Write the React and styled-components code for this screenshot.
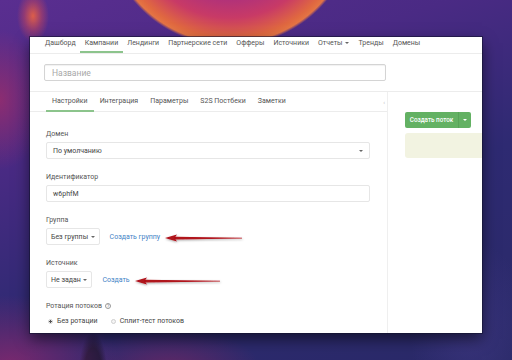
import React from "react";
import styled, { createGlobalStyle } from "styled-components";

const Global = createGlobalStyle`
  html, body { margin: 0; padding: 0; }
  body { font-family: Roboto, "Liberation Sans", sans-serif; }
  * { box-sizing: border-box; }
`;

const Desktop = styled.div`
  position: relative;
  width: 512px;
  height: 360px;
  overflow: hidden;
  padding: 37px 0 0 30px;
  background:
    radial-gradient(circle at 230px -80px, #7a2a92 0, #a02c88 65px, #c83a66 98px, #e06840 118px, #e47444 123px, rgba(90,40,130,0) 126px),
    radial-gradient(ellipse 16px 26px at 33px 16px, rgba(228,96,70,0.95) 0, rgba(200,70,90,0.5) 55%, rgba(200,70,90,0) 100%),
    radial-gradient(ellipse 45px 70px at 0px 100px, rgba(160,45,105,0.75) 0, rgba(160,45,105,0) 100%),
    radial-gradient(ellipse 110px 70px at 10px 365px, rgba(130,40,110,0.9) 0, rgba(130,40,110,0) 100%),
    radial-gradient(ellipse 14px 40px at 93px 372px, #191936 0, #191936 60%, rgba(25,25,54,0) 100%),
    radial-gradient(ellipse 90px 40px at 170px 368px, rgba(110,40,100,0.8) 0, rgba(110,40,100,0) 100%),
    radial-gradient(ellipse 60px 90px at 470px 330px, rgba(70,60,140,0.5) 0, rgba(70,60,140,0) 100%),
    linear-gradient(160deg, #5a2e90 0%, #4a2a84 30%, #2e2a72 60%, #2a2a68 100%);
`;

const Window = styled.div`
  width: 452px;
  height: 296px;
  background: #fff;
  overflow: hidden;
  display: flex;
  flex-direction: column;
  box-shadow: 0 0 0 1px rgba(20, 20, 50, 0.6), 0 6px 14px rgba(0, 0, 0, 0.55);
`;

const Nav = styled.nav`
  height: 17px;
  flex: none;
  display: flex;
  align-items: stretch;
  padding-left: 10.5px;
  border-bottom: 1px solid #ececec;
`;

const NavItem = styled.div`
  display: flex;
  align-items: center;
  padding: 0 4.5px 2px;
  font-size: 7px;
  color: #555;
  white-space: nowrap;
  border-bottom: 2px solid ${(p) => (p.$active ? "#8cc48c" : "transparent")};
`;

const Caret = styled.span`
  display: inline-block;
  width: 0;
  height: 0;
  margin-left: ${(p) => p.$gap ?? 3}px;
  border-left: 2px solid transparent;
  border-right: 2px solid transparent;
  border-top: 2px solid ${(p) => p.$color || "#666"};
  vertical-align: middle;
`;

const TitleBar = styled.div`
  height: 38px;
  flex: none;
  padding: 10px 0 0 14px;
  border-bottom: 1px solid #ececec;
`;

const TitleInput = styled.div`
  width: 342px;
  height: 17px;
  border: 1px solid #d4d4d4;
  border-radius: 2px;
  box-shadow: inset 0 1px 1px rgba(0, 0, 0, 0.06);
  display: flex;
  align-items: center;
  padding-left: 7px;
  font-size: 8.5px;
  color: #a8a8a8;
`;

const Body = styled.div`
  flex: 1;
  display: flex;
  min-height: 0;
`;

const Main = styled.div`
  width: 358px;
  flex: none;
  border-right: 1px solid #efefef;
  display: flex;
  flex-direction: column;
`;

const Tabs = styled.div`
  position: relative;
  height: 20px;
  flex: none;
  display: flex;
  padding-left: 16px;
  border-bottom: 1px solid #ececec;
`;

const Tab = styled.div`
  display: flex;
  align-items: center;
  padding: 0 6px;
  font-size: 7px;
  color: #555;
  white-space: nowrap;
  border-bottom: 2px solid ${(p) => (p.$active ? "#8cc48c" : "transparent")};
  margin-bottom: -1px;
`;

const Collapse = styled.span`
  position: absolute;
  right: 2px;
  top: 6px;
  font-size: 6px;
  color: #bbb;
`;

const Form = styled.div`
  padding: 17px 0 0 16px;
  display: flex;
  flex-direction: column;
`;

const Label = styled.div`
  font-size: 7px;
  color: #555;
  height: 10px;
  line-height: 10px;
  margin-bottom: 3px;
  display: flex;
  align-items: center;
  gap: 3px;
`;

const Field = styled.div`
  width: 324px;
  height: 17px;
  border: 1px solid #e6e6e6;
  border-radius: 2px;
  display: flex;
  align-items: center;
  justify-content: space-between;
  padding: 0 6px;
  font-size: 7px;
  color: #444;
  margin-bottom: 13px;
`;

const Row = styled.div`
  display: flex;
  align-items: center;
  gap: 10px;
  margin-bottom: 13px;
`;

const DropBtn = styled.div`
  height: 17px;
  border: 1px solid #e6e6e6;
  border-radius: 2px;
  display: flex;
  align-items: center;
  padding: 0 4px;
  font-size: 7px;
  color: #444;
  white-space: nowrap;
`;

const Link = styled.span`
  font-size: 7px;
  color: #3f83c6;
  white-space: nowrap;
`;

const Help = styled.span`
  width: 6px;
  height: 6px;
  border: 0.8px solid #999;
  border-radius: 50%;
  font-size: 4.5px;
  line-height: 5px;
  text-align: center;
  color: #888;
`;

const Radios = styled.div`
  display: flex;
  align-items: center;
  gap: 13px;
  padding-left: 2px;
  margin-top: 3px;
`;

const RadioOpt = styled.label`
  display: flex;
  align-items: center;
  gap: 4px;
  font-size: 7px;
  color: #444;
`;

const Dot = styled.span`
  width: 5px;
  height: 5px;
  border-radius: 50%;
  border: 1px solid #cfcfcf;
  background: ${(p) => (p.$on ? "radial-gradient(circle, #555 0 1.2px, #fff 1.4px)" : "#f4f4f4")};
`;

const Side = styled.div`
  flex: 1;
  padding: 20px 0 0 17px;
  display: flex;
  flex-direction: column;
  gap: 5px;
`;

const SplitBtn = styled.div`
  display: flex;
  width: 66px;
  height: 16px;
  border-radius: 2px;
  background: #63b163;
  color: #fff;
  font-size: 6.3px;
  font-weight: 500;
  overflow: hidden;
`;

const SplitMain = styled.div`
  flex: 1;
  display: flex;
  align-items: center;
  justify-content: center;
`;

const SplitCaret = styled.div`
  width: 13px;
  display: flex;
  align-items: center;
  justify-content: center;
  border-left: 1px solid #58a358;
`;

const Note = styled.div`
  height: 25px;
  margin-right: -2px;
  border-radius: 3px 0 0 3px;
  background: #f2f3e1;
`;

const ArrowSvg = styled.svg`
  position: absolute;
  left: 0;
  top: 0;
  pointer-events: none;
`;

function Arrow({ x1, x2, y }) {
  return (
    <g filter="url(#ash)">
      <path
        d={`M${x1 + 9} ${y - 1.3} L${x2} ${y - 0.2} L${x2} ${y + 0.6} L${x1 + 9} ${y + 1.5} Z`}
        fill="#b0121a"
      />
      <path d={`M${x1} ${y + 0.1} L${x1 + 12} ${y - 3.4} L${x1 + 9.5} ${y + 0.1} L${x1 + 12} ${y + 3.6} Z`} fill="#b0121a" />
    </g>
  );
}

export default function App() {
  const nav = ["Дашборд", "Кампании", "Лендинги", "Партнерские сети", "Офферы", "Источники", "Отчеты", "Тренды", "Домены"];
  const tabs = ["Настройки", "Интеграция", "Параметры", "S2S Постбеки", "Заметки"];
  return (
    <>
      <Global />
      <Desktop>
        <Window>
          <Nav>
            {nav.map((n) => (
              <NavItem key={n} $active={n === "Кампании"}>
                {n}
                {n === "Отчеты" && <Caret $gap={3} />}
              </NavItem>
            ))}
          </Nav>
          <TitleBar>
            <TitleInput>Название</TitleInput>
          </TitleBar>
          <Body>
            <Main>
              <Tabs>
                {tabs.map((t) => (
                  <Tab key={t} $active={t === "Настройки"}>
                    {t}
                  </Tab>
                ))}
                <Collapse>‹</Collapse>
              </Tabs>
              <Form>
                <Label>Домен</Label>
                <Field>
                  По умолчанию
                  <Caret $color="#666" />
                </Field>
                <Label>Идентификатор</Label>
                <Field>w6phfM</Field>
                <Label>Группа</Label>
                <Row>
                  <DropBtn>
                    Без группы
                    <Caret $gap={2.5} />
                  </DropBtn>
                  <Link>Создать группу</Link>
                </Row>
                <Label>Источник</Label>
                <Row>
                  <DropBtn>
                    Не задан
                    <Caret $gap={2.5} />
                  </DropBtn>
                  <Link>Создать</Link>
                </Row>
                <Label>
                  Ротация потоков <Help>?</Help>
                </Label>
                <Radios>
                  <RadioOpt>
                    <Dot $on />
                    Без ротации
                  </RadioOpt>
                  <RadioOpt>
                    <Dot />
                    Сплит-тест потоков
                  </RadioOpt>
                </Radios>
              </Form>
            </Main>
            <Side>
              <SplitBtn>
                <SplitMain>Создать поток</SplitMain>
                <SplitCaret>
                  <Caret $gap={0} $color="#fff" />
                </SplitCaret>
              </SplitBtn>
              <Note />
            </Side>
          </Body>
        </Window>
        <ArrowSvg width="512" height="360" viewBox="0 0 512 360">
          <defs>
            <filter id="ash" x="-10%" y="-100%" width="120%" height="300%">
              <feDropShadow dx="0.5" dy="1" stdDeviation="0.8" floodColor="#000" floodOpacity="0.35" />
            </filter>
          </defs>
          <Arrow x1={165} x2={242} y={238} />
          <Arrow x1={135} x2={220} y={281} />
        </ArrowSvg>
      </Desktop>
    </>
  );
}
